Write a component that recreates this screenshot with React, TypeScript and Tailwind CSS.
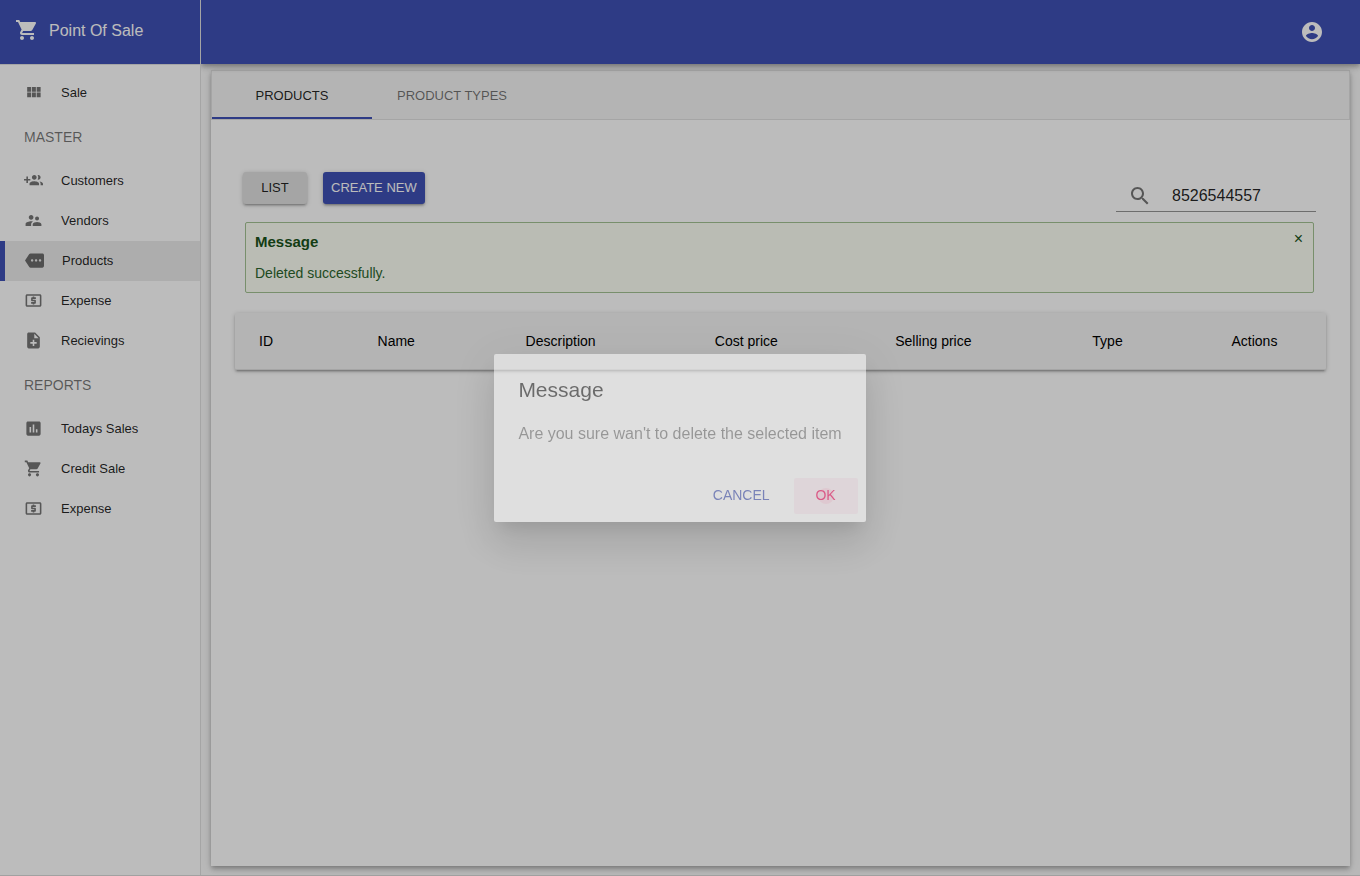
import React, { useState } from "react";

const icons = {
  cart: "M7 18c-1.1 0-1.99.9-1.99 2S5.9 22 7 22s2-.9 2-2-.9-2-2-2zM1 2v2h2l3.6 7.59-1.35 2.45c-.16.28-.25.61-.25.96 0 1.1.9 2 2 2h12v-2H7.42c-.14 0-.25-.11-.25-.25l.03-.12.9-1.63h7.45c.75 0 1.41-.41 1.75-1.03l3.58-6.49c.08-.14.12-.31.12-.48 0-.55-.45-1-1-1H5.21l-.94-2H1zm16 16c-1.1 0-1.99.9-1.99 2s.89 2 1.99 2 2-.9 2-2-.9-2-2-2z",
  modules: "M4 11h5V5H4v6zm0 7h5v-6H4v6zm6 0h5v-6h-5v6zm6 0h5v-6h-5v6zm-6-7h5V5h-5v6zm6-6v6h5V5h-5z",
  groupAdd: "M8 10H5V7H3v3H0v2h3v3h2v-3h3v-2zm10 1c1.66 0 2.99-1.34 2.99-3S19.66 5 18 5c-.32 0-.63.05-.91.14.57.81.9 1.79.9 2.86s-.34 2.04-.9 2.86c.28.09.59.14.91.14zm-5 0c1.66 0 2.99-1.34 2.99-3S14.66 5 13 5c-1.66 0-3 1.34-3 3s1.34 3 3 3zm6.62 2.16c.83.73 1.38 1.66 1.38 2.84v2h3v-2c0-1.54-2.37-2.49-4.38-2.84zM13 13c-2 0-6 1-6 3v2h12v-2c0-2-4-3-6-3z",
  supervisor: "M16.5 12c1.38 0 2.49-1.12 2.49-2.5S17.88 7 16.5 7C15.12 7 14 8.12 14 9.5s1.12 2.5 2.5 2.5zM9 11c1.66 0 2.99-1.34 2.99-3S10.66 5 9 5C7.34 5 6 6.34 6 8s1.34 3 3 3zm7.5 3c-1.83 0-5.5.92-5.5 2.75V19h11v-2.25c0-1.83-3.67-2.75-5.5-2.75zM9 13c-2.33 0-7 1.17-7 3.5V19h7v-2.25c0-.85.33-2.34 2.37-3.47C10.5 13.1 9.66 13 9 13z",
  more: "M22 3H7c-.69 0-1.23.35-1.59.88L0 12l5.41 8.11c.36.53.97.89 1.66.89H22c1.1 0 2-.9 2-2V5c0-1.1-.9-2-2-2zM9 13.5c-.83 0-1.5-.67-1.5-1.5s.67-1.5 1.5-1.5 1.5.67 1.5 1.5-.67 1.5-1.5 1.5zm5 0c-.83 0-1.5-.67-1.5-1.5s.67-1.5 1.5-1.5 1.5.67 1.5 1.5-.67 1.5-1.5 1.5zm5 0c-.83 0-1.5-.67-1.5-1.5s.67-1.5 1.5-1.5 1.5.67 1.5 1.5-.67 1.5-1.5 1.5z",
  atm: "M11 17h2v-1h1c.55 0 1-.45 1-1v-3c0-.55-.45-1-1-1h-3v-1h4V8h-2V7h-2v1h-1c-.55 0-1 .45-1 1v3c0 .55.45 1 1 1h3v1H9v2h2v1zm9-13H4c-1.11 0-1.99.89-1.99 2L2 18c0 1.11.89 2 2 2h16c1.11 0 2-.89 2-2V6c0-1.11-.89-2-2-2zm0 14H4V6h16v12z",
  noteAdd: "M14 2H6c-1.1 0-1.99.9-1.99 2L4 20c0 1.1.89 2 1.99 2H18c1.1 0 2-.9 2-2V8l-6-6zm2 14h-3v3h-2v-3H8v-2h3v-3h2v3h3v2zm-3-7V3.5L18.5 9H13z",
  assessment: "M19 3H5c-1.1 0-2 .9-2 2v14c0 1.1.9 2 2 2h14c1.1 0 2-.9 2-2V5c0-1.1-.9-2-2-2zM9 17H7v-7h2v7zm4 0h-2V7h2v10zm4 0h-2v-4h2v4z",
  search: "M15.5 14h-.79l-.28-.27C15.41 12.59 16 11.11 16 9.5 16 5.91 13.09 3 9.5 3S3 5.91 3 9.5 5.91 16 9.5 16c1.61 0 3.09-.59 4.23-1.57l.27.28v.79l5 4.99L20.49 19l-4.99-5zm-6 0C7.01 14 5 11.99 5 9.5S7.01 5 9.5 5 14 7.01 14 9.5 11.99 14 9.5 14z",
  account: "M12 2C6.48 2 2 6.48 2 12s4.48 10 10 10 10-4.48 10-10S17.52 2 12 2zm0 3c1.66 0 3 1.34 3 3s-1.34 3-3 3-3-1.34-3-3 1.34-3 3-3zm0 14.2c-2.5 0-4.71-1.28-6-3.22.03-1.99 4-3.08 6-3.08 1.99 0 5.97 1.09 6 3.08-1.29 1.94-3.5 3.22-6 3.22z",
};

type IconName = keyof typeof icons;

function Icon({ name, className }: { name: IconName; className: string }) {
  return (
    <svg viewBox="0 0 24 24" fill="currentColor" aria-hidden="true" className={`shrink-0 ${className}`}>
      <path d={icons[name]} />
    </svg>
  );
}

function NavItem({ icon, label, active = false }: { icon: IconName; label: string; active?: boolean }) {
  return (
    <li>
      <a
        href="#"
        aria-current={active ? "page" : undefined}
        className={`flex h-10 items-center gap-[18px] text-[13px] text-black/87 ${
          active ? "border-l-[5px] border-[#3f51b5] bg-black/8 pl-5" : "pl-6"
        }`}
      >
        <Icon name={icon} className="mb-px size-[19px] text-black/54" />
        {label}
      </a>
    </li>
  );
}

function NavHeading({ children }: { children: React.ReactNode }) {
  return <li className="flex h-12 items-center px-6 text-sm text-black/54">{children}</li>;
}

const columns = ["ID", "Name", "Description", "Cost price", "Selling price", "Type", "Actions"];
const raised =
  "shadow-[0_1px_5px_0_rgba(0,0,0,0.2),0_2px_2px_0_rgba(0,0,0,0.14),0_3px_1px_-2px_rgba(0,0,0,0.12)]";
const floating =
  "shadow-[0_2px_4px_-1px_rgba(0,0,0,0.2),0_4px_5px_0_rgba(0,0,0,0.14),0_1px_10px_0_rgba(0,0,0,0.12)]";

export default function App() {
  const [query, setQuery] = useState("8526544557");

  return (
    <div className="flex min-h-screen border-b border-black/12 bg-[#fafafa] font-['Liberation_Sans',Arial,sans-serif] text-black/87">
      <aside className="z-20 w-[201px] shrink-0 border-r border-[#e0e0e0] bg-white">
        <div className="flex h-[65px] items-start gap-2.5 border-b border-[#e0e0e0] bg-[#3f51b5] pt-[18px] pl-[15px] text-base text-white">
          <Icon name="cart" className="size-6" />
          <span className="leading-[26px]">Point Of Sale</span>
        </div>
        <nav aria-label="Main">
          <ul className="py-2">
            <NavItem icon="modules" label="Sale" />
            <NavHeading>MASTER</NavHeading>
            <NavItem icon="groupAdd" label="Customers" />
            <NavItem icon="supervisor" label="Vendors" />
            <NavItem icon="more" label="Products" active />
            <NavItem icon="atm" label="Expense" />
            <NavItem icon="noteAdd" label="Recievings" />
            <NavHeading>REPORTS</NavHeading>
            <NavItem icon="assessment" label="Todays Sales" />
            <NavItem icon="cart" label="Credit Sale" />
            <NavItem icon="atm" label="Expense" />
          </ul>
        </nav>
      </aside>

      <div className="flex min-w-0 flex-1 flex-col">
        <header className={`z-10 flex h-16 items-center justify-end bg-[#3f51b5] px-9 text-white ${floating}`}>
          <button type="button" aria-label="Account">
            <Icon name="account" className="size-6" />
          </button>
        </header>

        <main className="flex flex-1 flex-col px-2.5 pt-1.5 pb-[9px]">
          <div className={`flex-1 bg-white ${floating}`}>
            <div role="tablist" className="flex border border-[#e0e0e0] bg-[#f5f5f5] text-[13px]">
              <button type="button" role="tab" aria-selected="true" className="h-12 w-40 border-b-2 border-[#3f51b5] pt-1">
                PRODUCTS
              </button>
              <button type="button" role="tab" aria-selected="false" className="h-12 w-40 pt-0.5 text-black/54">
                PRODUCT TYPES
              </button>
            </div>

            <div className="flex h-[92px] items-end justify-between pr-[34px] pl-8">
              <div className="flex gap-4 pb-2 text-[13px]">
                <button type="button" className={`h-8 w-16 rounded-[3px] bg-[#e0e0e0] ${raised}`}>
                  LIST
                </button>
                <button type="button" className={`h-8 rounded-[3px] bg-[#3f51b5] px-2 text-white ${raised}`}>
                  CREATE NEW
                </button>
              </div>
              <label className="flex h-8 w-[200px] items-center gap-5 border-b border-black/42 pl-3">
                <Icon name="search" className="size-6 text-black/54" />
                <input
                  type="text"
                  aria-label="Search products"
                  value={query}
                  onChange={(e) => setQuery(e.target.value)}
                  className="w-full min-w-0 bg-transparent text-base outline-none"
                />
              </label>
            </div>

            <section className="mt-2.5 mr-9 ml-[34px] flex h-[71px] items-start justify-between rounded-xs border border-[#a3c293] bg-[#fcfff5] px-[9px] pt-[9px] text-[#2c662d]">
              <div>
                <h2 className="text-[15px] leading-5 font-bold text-[#1a531b]">Message</h2>
                <p className="mt-[11px] text-sm leading-5">Deleted successfully.</p>
              </div>
              <button type="button" aria-label="Dismiss message" className="mr-px text-base leading-[14px] text-[#1a531b]">
                ×
              </button>
            </section>

            <div className="mx-6 mt-5">
              <table className={`w-full rounded-xs bg-[#f5f5f5] text-sm text-black ${raised}`}>
                <thead>
                  <tr className="h-14 border-b border-[#e0e0e0]">
                    {columns.map((column) => (
                      <th key={column} scope="col" className="pr-14 pl-6 text-left font-normal whitespace-nowrap last:pr-6">
                        {column}
                      </th>
                    ))}
                  </tr>
                </thead>
              </table>
            </div>
          </div>
        </main>
      </div>

      <div className="fixed inset-0 z-30 flex items-center justify-center bg-black/[0.263]">
        <div
          role="dialog"
          aria-modal="true"
          aria-labelledby="dialog-title"
          className="rounded-xs bg-white opacity-[0.526] shadow-[0_11px_15px_-7px_rgba(0,0,0,0.2),0_24px_38px_3px_rgba(0,0,0,0.14),0_9px_46px_8px_rgba(0,0,0,0.12)]"
        >
          <h2 id="dialog-title" className="px-6 pt-6 pb-5 text-[21px] leading-6">
            Message
          </h2>
          <p className="px-6 pb-6 text-base leading-6 text-black/54">Are you sure wan't to delete the selected item</p>
          <div className="flex justify-end gap-2 px-2 pt-2 pb-2 text-sm">
            <button type="button" className="h-9 px-4 pb-0.5 text-[#3f51b5]">
              CANCEL
            </button>
            <button type="button" className="relative h-9 w-16 rounded-xs bg-[#f50057]/7 pb-0.5 text-[#f50057]">
              <span className="absolute inset-0 m-auto size-4 rounded-full bg-[#f50057]/10" />
              OK
            </button>
          </div>
        </div>
      </div>
    </div>
  );
}
